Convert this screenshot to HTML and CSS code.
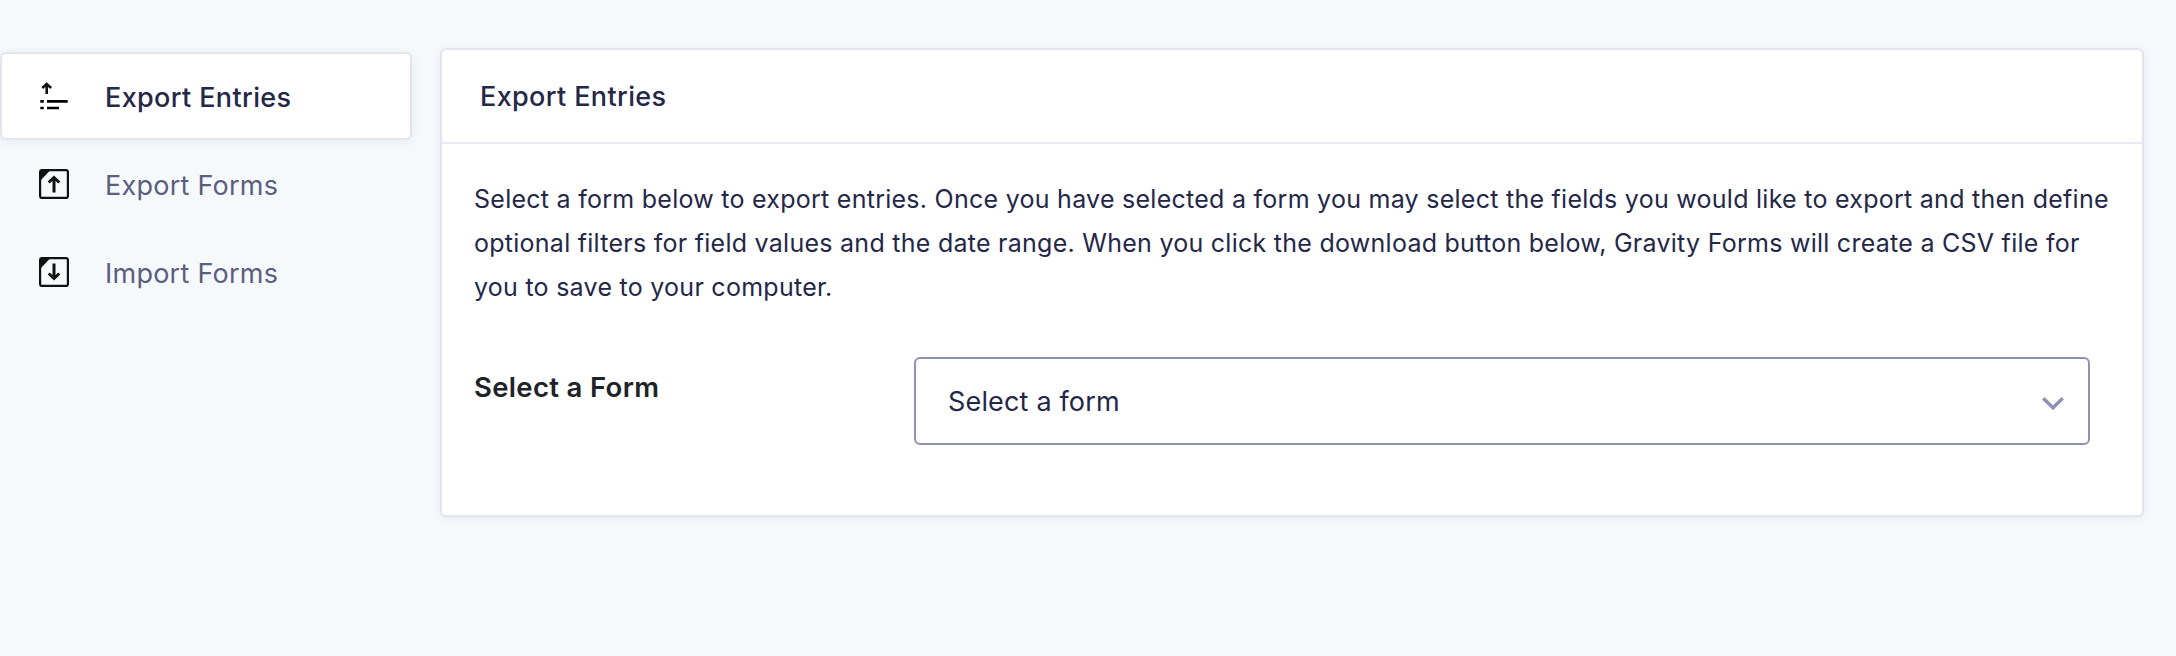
FILE: index.html
```html
<!DOCTYPE html>
<html lang="en">
<head>
<meta charset="utf-8">
<title>Export Entries</title>
<link rel="stylesheet" href="styles.css">
</head>
<body>
<div class="page">
  <nav class="tabs">
    <a class="tab tab-active">
      <svg class="icon" viewBox="0 0 30 30" fill="none" stroke="#111"><path d="M7.700 13V3.500M3.300 7 7.700 3l4.400 4" stroke-width="2.600"/><path d="M1.300 20.300h3.500M8 20.300h20.700M1.300 27h3.500M8 27h12" stroke="#000" stroke-width="2.700"/></svg>
      <span class="label">Export Entries</span>
    </a>
    <a class="tab">
      <svg class="icon" viewBox="0 0 30 30" fill="none" stroke="#111"><rect x="1.100" y="1.100" width="27.800" height="27.800" rx="2" stroke-width="2.200"/><path d="M1.500 1.500h9.500L1.500 11.500z" fill="#111" stroke="none"/><path d="M15 23.500V9M9.700 13.500 15 8.500l5.300 5" stroke-width="3"/></svg>
      <span class="label label-regular">Export Forms</span>
    </a>
    <a class="tab">
      <svg class="icon" viewBox="0 0 30 30" fill="none" stroke="#111"><rect x="1.100" y="1.100" width="27.800" height="27.800" rx="2" stroke-width="2.200"/><path d="M1.500 1.500h9.500L1.500 11.500z" fill="#111" stroke="none"/><path d="M15 6.500V21M9.700 16.500 15 21.500l5.300-5" stroke-width="3"/></svg>
      <span class="label label-regular">Import Forms</span>
    </a>
  </nav>
  <main class="panel">
    <h1 class="panel-title">Export Entries</h1>
    <div class="panel-body">
      <p class="intro">Select a form below to export entries. Once you have selected a form you may select the fields you would like to export and then define<br>optional filters for field values and the date range. When you click the download button below, Gravity Forms will create a CSV file for<br>you to save to your computer.</p>
      <div class="field">
        <div class="field-label">Select a Form</div>
        <div class="select">
          <span class="select-value">Select a form</span>
          <svg class="chevron" viewBox="0 0 24 14" fill="none" stroke="#9092b2" stroke-width="3.600"><path d="M2.300 2.300 12 11.700 21.700 2.300"/></svg>
        </div>
      </div>
    </div>
  </main>
</div>
</body>
</html>
```
FILE: styles.css
```css
* { box-sizing: border-box; }
body { margin: 0; background: #f6f9fc; color: #242748; font-family: Inter, "Liberation Sans", sans-serif; }
.page { display: flex; align-items: flex-start; gap: 28px; height: 656px; padding-top: 48px; }
.tabs { width: 412px; padding-top: 4px; }
.tab { display: flex; align-items: center; gap: 36px; height: 88px; padding-left: 37px; border: 2px solid transparent; border-radius: 6px; color: #5b5e80; font-size: 27px; }
.tab-active { background: #fff; border-color: #e3e4ef; box-shadow: 0 2px 8px rgba(36, 39, 72, .08); color: #242748; font-weight: 500; }
.icon { width: 30px; height: 30px; overflow: visible; }
.label { padding-top: 2px; letter-spacing: .37px; white-space: nowrap; }
.label-regular { letter-spacing: .25px; }
.panel { width: 1704px; height: 469px; background: #fff; border: 2px solid #e3e4ef; border-radius: 6px; box-shadow: 0 2px 8px rgba(36, 39, 72, .08); }
.panel-title { margin: 0; height: 94px; padding-left: 38px; border-bottom: 2px solid #e9e9ef; font-size: 27px; font-weight: 500; letter-spacing: .37px; line-height: 93px; }
.panel-body { padding: 33px 32px 0; }
.intro { margin: 0; font-size: 25px; letter-spacing: .263px; line-height: 44px; white-space: nowrap; }
.field { display: flex; align-items: flex-start; margin-top: 48px; }
.field-label { width: 440px; padding-top: 9px; color: #1d2327; font-size: 27.500px; font-weight: 600; letter-spacing: .33px; line-height: 42px; }
.select { display: flex; align-items: center; justify-content: space-between; width: 1176px; height: 88px; padding: 0 23px 0 32px; border: 2px solid #9092b2; border-radius: 6px; font-size: 27px; letter-spacing: .17px; }
.chevron { width: 24px; height: 14px; margin-top: 3px; }
```
